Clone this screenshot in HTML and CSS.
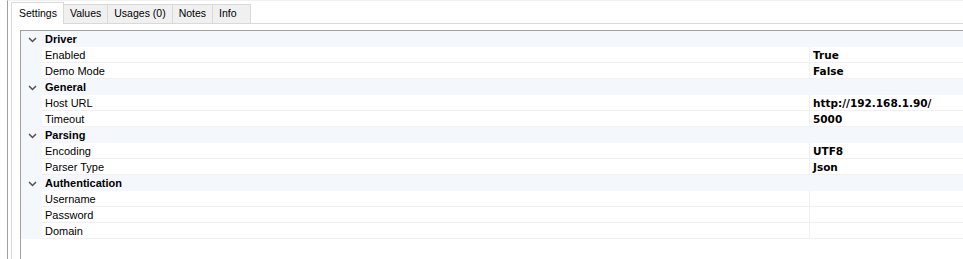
FILE: index.html
```html
<!DOCTYPE html>
<html>
<head>
    <meta charset="utf-8">
    <title>Driver Settings</title>
    <link rel="stylesheet" href="styles.css">
</head>
<body>
    <div class="frame">
        <div class="tab-control">
            <div class="tab-strip">
                <div class="tab selected">Settings</div>
                <div class="tab">Values</div>
                <div class="tab">Usages (0)</div>
                <div class="tab">Notes</div>
                <div class="tab">Info</div>
            </div>

            <div class="tab-page">
                <div class="property-grid">
                    <div class="category">
                        <span class="toggle"><svg width="9" height="6" viewBox="0 0 9 6"><path d="M1 1 L4.5 4.5 L8 1" /></svg></span>
                        <span class="cat-name">Driver</span>
                    </div>
                    <div class="prop"><span class="gutter"></span><span class="name">Enabled</span><span class="value">True</span></div>
                    <div class="prop"><span class="gutter"></span><span class="name">Demo Mode</span><span class="value">False</span></div>

                    <div class="category">
                        <span class="toggle"><svg width="9" height="6" viewBox="0 0 9 6"><path d="M1 1 L4.5 4.5 L8 1" /></svg></span>
                        <span class="cat-name">General</span>
                    </div>
                    <div class="prop"><span class="gutter"></span><span class="name">Host URL</span><span class="value">http://192.168.1.90/</span></div>
                    <div class="prop"><span class="gutter"></span><span class="name">Timeout</span><span class="value">5000</span></div>

                    <div class="category">
                        <span class="toggle"><svg width="9" height="6" viewBox="0 0 9 6"><path d="M1 1 L4.5 4.5 L8 1" /></svg></span>
                        <span class="cat-name">Parsing</span>
                    </div>
                    <div class="prop"><span class="gutter"></span><span class="name">Encoding</span><span class="value">UTF8</span></div>
                    <div class="prop"><span class="gutter"></span><span class="name">Parser Type</span><span class="value">Json</span></div>

                    <div class="category">
                        <span class="toggle"><svg width="9" height="6" viewBox="0 0 9 6"><path d="M1 1 L4.5 4.5 L8 1" /></svg></span>
                        <span class="cat-name">Authentication</span>
                    </div>
                    <div class="prop"><span class="gutter"></span><span class="name">Username</span><span class="value"></span></div>
                    <div class="prop"><span class="gutter"></span><span class="name">Password</span><span class="value"></span></div>
                    <div class="prop"><span class="gutter"></span><span class="name">Domain</span><span class="value"></span></div>
                </div>
            </div>
        </div>
    </div>
</body>
</html>
```

FILE: styles.css
```css
/* Page */
html, body {
    margin: 0;
    padding: 0;
    height: 259px;
    overflow: hidden;
    background-color: #fff;
}

body {
    font-family: "Liberation Sans", Arial, sans-serif;
    font-size: 11px;
    color: #000;
}

/* Outer window edge */
.frame {
    box-sizing: border-box;
    height: 259px;
    margin-left: 7px;
    border-left: 1px solid #a0a0a0;
    border-top: 1px solid #f0f0f0;
    padding-left: 3px;
}

.tab-control {
    display: flex;
    flex-direction: column;
    height: 100%;
}

/* Tabs */
.tab-strip {
    display: flex;
    align-items: flex-end;
    height: 22px;
    padding-left: 1px;
}

.tab {
    box-sizing: border-box;
    min-width: 39px;
    height: 19px;
    line-height: 17px;
    padding: 0 6px;
    margin-left: -1px;
    font-size: 10.5px;
    color: #000;
    background-color: #f0f0f0;
    border: 1px solid #d9d9d9;
    border-bottom: none;
}

.tab.selected {
    position: relative;
    height: 22px;
    line-height: 20px;
    margin-bottom: -1px;
    padding: 0 6px 0 7px;
    background-color: #fff;
    z-index: 1;
}

.tab-page {
    flex: 1;
    border: 1px solid #d9d9d9;
    border-bottom: none;
    border-right: none;
    padding: 6px 0 0 8px;
}

/* Property grid */
.property-grid {
    height: 100%;
    border-top: 1px solid #a0a0a0;
    border-left: 1px solid #a0a0a0;
    background-color: #fff;
}

.category {
    display: flex;
    align-items: center;
    height: 16px;
    background-color: #f4f7fc;
}

.toggle {
    display: flex;
    align-items: center;
    justify-content: center;
    width: 22px;
    height: 16px;
}

.toggle svg {
    display: block;
    margin-top: 1px;
}

.toggle path {
    fill: none;
    stroke: #505050;
    stroke-width: 1.5;
}

.cat-name {
    padding-left: 2px;
    font-weight: bold;
}

.prop {
    display: grid;
    grid-template-columns: 21px 767px 1fr;
    height: 16px;
}

.gutter {
    background-color: #f4f7fc;
}

.name,
.value {
    box-sizing: border-box;
    height: 16px;
    line-height: 16px;
    padding-left: 3px;
    border-bottom: 1px solid #f0f0f0;
    white-space: nowrap;
}

.value {
    border-left: 1px solid #f0f0f0;
    font-family: "DejaVu Sans", sans-serif;
    font-size: 10.5px;
    font-weight: bold;
}
```
